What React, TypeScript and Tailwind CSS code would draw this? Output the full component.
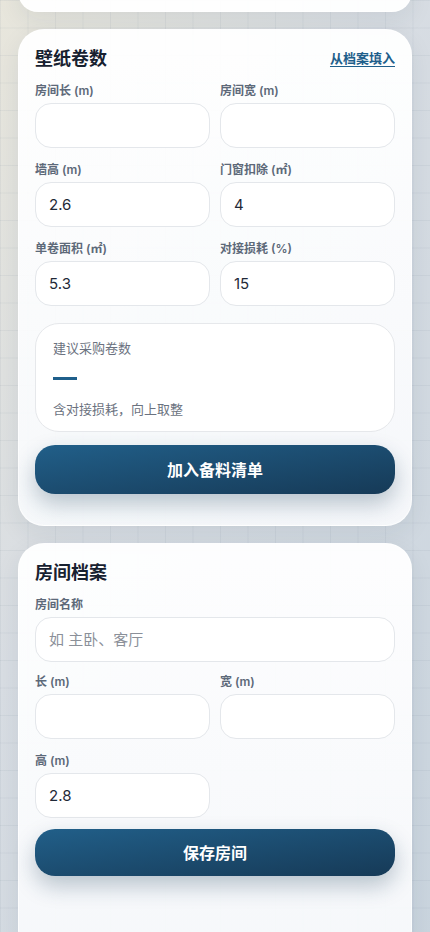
import React from 'react';

const font = { fontFamily: 'Inter, "Noto Sans CJK SC", sans-serif' };

interface FieldProps {
    label: string;
    value?: string;
    placeholder?: string;
}

const Field: React.FC<FieldProps> = ({ label, value, placeholder }) => (
    <div className="flex flex-col">
        <label className="text-[12px] leading-4 font-semibold text-[#5d6979] mb-1">{label}</label>
        <input
            readOnly
            value={value ?? ''}
            placeholder={placeholder}
            className="h-[45px] w-full rounded-2xl border border-[#e4e7eb] bg-white px-[13px] text-[15px] text-[#1f2937] placeholder:text-[#8b9099] outline-none"
        />
    </div>
);

const PrimaryButton: React.FC<{ children: React.ReactNode; className?: string }> = ({ children, className }) => (
    <button className={`w-full rounded-[20px] bg-gradient-to-br from-[#215f89] to-[#163a57] text-white text-[16px] font-bold shadow-[0_10px_22px_rgba(22,58,87,0.28)] ${className ?? ''}`}>
        {children}
    </button>
);

const Card: React.FC<{ children: React.ReactNode; className?: string }> = ({ children, className }) => (
    <section className={`mx-[18px] rounded-[26px] border border-white/70 bg-gradient-to-b from-white/95 to-[#f7f9fb]/95 px-4 pt-[15px] shadow-[0_8px_24px_rgba(30,50,70,0.08)] ${className ?? ''}`}>
        {children}
    </section>
);

export default function App() {
    return (
        <div
            style={font}
            className="min-h-[932px] overflow-hidden [background-image:linear-gradient(rgba(100,116,139,0.08)_1px,transparent_1px),linear-gradient(90deg,rgba(100,116,139,0.08)_1px,transparent_1px),linear-gradient(120deg,#e8e6dc_0%,#d8dde3_40%,#c9d4de_100%)] [background-size:27.5px_27.5px,27.5px_27.5px,100%_100%]"
        >
            {/* bottom of the previous card, scrolled off */}
            <div className="mx-[18px] -mt-[28px] h-[40px] rounded-[26px] border border-white/70 bg-white/95 shadow-[0_8px_24px_rgba(30,50,70,0.08)]" />

            <Card className="mt-[17px] pb-[31px]">
                <div className="flex items-center justify-between mb-[10px]">
                    <h2 className="text-[18px] leading-7 font-bold text-[#172130]">壁纸卷数</h2>
                    <a className="text-[13px] font-bold text-[#1f5f8b] underline underline-offset-[3px]">从档案填入</a>
                </div>

                <div className="grid grid-cols-2 gap-x-[10px] gap-y-[14px]">
                    <Field label="房间长 (m)" />
                    <Field label="房间宽 (m)" />
                    <Field label="墙高 (m)" value="2.6" />
                    <Field label="门窗扣除 (㎡)" value="4" />
                    <Field label="单卷面积 (㎡)" value="5.3" />
                    <Field label="对接损耗 (%)" value="15" />
                </div>

                <div className="mt-[17px] rounded-3xl border border-[#e6e8eb] bg-white px-[17px] pt-[15px] pb-[13px]">
                    <p className="text-[13px] leading-[18px] text-[#6b7280]">建议采购卷数</p>
                    <div className="h-[43px] flex items-center">
                        <div className="w-6 h-[3px] bg-[#1f5f8b]" />
                    </div>
                    <p className="text-[13px] leading-[18px] text-[#6b7280]">含对接损耗，向上取整</p>
                </div>

                <PrimaryButton className="mt-[13px] h-[49px]">加入备料清单</PrimaryButton>
            </Card>

            <Card className="mt-[17px] pb-[80px]">
                <h2 className="text-[18px] leading-7 font-bold text-[#172130] mb-[10px]">房间档案</h2>

                <Field label="房间名称" placeholder="如 主卧、客厅" />

                <div className="grid grid-cols-2 gap-x-[10px] gap-y-[14px] mt-3">
                    <Field label="长 (m)" />
                    <Field label="宽 (m)" />
                    <Field label="高 (m)" value="2.8" />
                </div>

                <PrimaryButton className="mt-[11px] h-[47px]">保存房间</PrimaryButton>
            </Card>
        </div>
    );
}
